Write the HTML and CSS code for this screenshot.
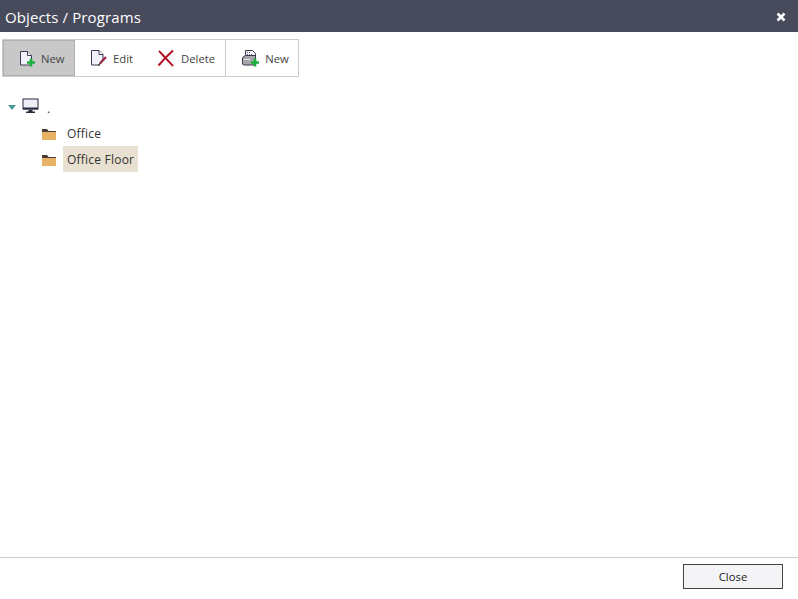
FILE: index.html
```html
<!DOCTYPE html>
<html lang="en">
<head>
<meta charset="utf-8">
<title>Objects / Programs</title>
<link rel="stylesheet" href="styles.css">
</head>
<body>
<div class="dialog">
  <header class="titlebar">
    <span class="title">Objects / Programs</span>
    <svg class="close-x" width="10" height="10" viewBox="0 0 10 10"><path d="M1.500 1.500l7 7M8.500 1.500l-7 7" stroke="#fff" stroke-width="2.600" fill="none"/></svg>
  </header>
  <div class="toolbar">
    <div class="group">
      <button class="tool active">
        <svg class="ico" width="18" height="18" viewBox="0 0 18 18"><path d="M3.500 2.500h7l4 4v9.500h-11z" fill="#f1f1fb" stroke="#3a3a55"/><path d="M10.500 2.500v4h4" fill="#fff" stroke="#3a3a55"/><path d="M12.700 9.500h2.600v2.700H18v2.600h-2.700v2.700h-2.600v-2.700H10v-2.600h2.700z" fill="#1aae3e"/></svg>
        <span>New</span>
      </button>
      <button class="tool edit">
        <svg class="ico" width="18" height="18" viewBox="0 0 18 18"><path d="M2.500 1.500h7.500l4 4v4.500l-4 6H2.500z" fill="#f1f1fb" stroke="#3a3a55"/><path d="M10 1.500v4h4" fill="#fff" stroke="#3a3a55"/><path d="M11 14.500l6-6.500" stroke="#a02845" stroke-width="2.200"/><path d="M9.500 16.800l1.500-2.300" stroke="#333" stroke-width="1.200"/></svg>
        <span>Edit</span>
      </button>
      <button class="tool del">
        <svg class="ico" width="18" height="18" viewBox="0 0 18 18"><path d="M2 2c4 4 9 10 14 15M16 1.500C11 6 6 11 1.500 16.500" stroke="#b01020" stroke-width="2" fill="none"/></svg>
        <span>Delete</span>
      </button>
    </div>
    <div class="group last">
      <button class="tool print">
        <svg class="ico" width="18" height="18" viewBox="0 0 18 18"><path d="M4.500 8V1.500h7l3 3V10" fill="#f6f6fb" stroke="#3a3a4a"/><path d="M6 3.500h4M6 5.500h6M6 7.500h6" stroke="#6a5a90" stroke-dasharray="1 1"/><path d="M1.500 8.500l3-2h10v9.500H2.500l-1-1z" fill="#a6a7ad" stroke="#3a3a4a"/><path d="M3 10.500h6" stroke="#e6e6ea"/><path d="M12.700 9.500h2.600v2.700H18v2.600h-2.700v2.700h-2.600v-2.700H10v-2.600h2.700z" fill="#1aae3e"/></svg>
        <span>New</span>
      </button>
    </div>
  </div>
  <main class="tree">
    <div class="node root">
      <span class="caret"></span>
      <svg class="pc" width="17" height="16" viewBox="0 0 17 16"><rect x="1" y="1" width="15" height="10" fill="#eeeef8" stroke="#2b2b40"/><rect x="1" y="9.500" width="15" height="2" fill="#2b2b40"/><path d="M6.500 12h4v1.500h2.500V15H4v-1.500h2.500z" fill="#2b2b40"/></svg>
      <span class="root-label">.</span>
    </div>
    <div class="node child">
      <svg class="folder" width="14" height="11" viewBox="0 0 14 11"><path d="M0 0h5l1.500 2H14v9H0z" fill="#e8b266"/><path d="M0 0h5l1.500 2H14v1H0z" fill="#4a3f35"/></svg>
      <span class="label">Office</span>
    </div>
    <div class="node child">
      <svg class="folder" width="14" height="11" viewBox="0 0 14 11"><path d="M0 0h5l1.500 2H14v9H0z" fill="#e8b266"/><path d="M0 0h5l1.500 2H14v1H0z" fill="#4a3f35"/></svg>
      <span class="label selected">Office Floor</span>
    </div>
  </main>
  <footer class="footer">
    <button class="close-btn">Close</button>
  </footer>
</div>
</body>
</html>
```
FILE: styles.css
```css
* { box-sizing: border-box; }
html, body { margin: 0; height: 100%; background: #fff; overflow: hidden; }
body { font-family: "Open Sans", "Noto Sans", sans-serif; font-size: 12px; color: #333; }
.dialog { display: flex; flex-direction: column; height: 599px; width: 798px; }
.titlebar { flex: none; height: 32px; background: #474a5a; color: #fff; display: flex; align-items: center; justify-content: space-between; padding: 1px 12px 0 5px; }
.title { font-size: 15px; letter-spacing: 0.12px; }
.toolbar { flex: none; display: flex; align-self: flex-start; margin: 7px 0 0 2px; height: 38px; border: 1px solid #ccc; }
.group { display: flex; }
.group.last { border-left: 1px solid #ccc; }
.tool { display: flex; align-items: center; gap: 6px; height: 36px; padding: 0 12px 0 14px; border: 0; background: none; font: inherit; font-size: 11.3px; color: #444; }
.tool.active { background: #c8c8c8; width: 72px; border: 1px solid #b0b0b0; padding-left: 13px; }
.tool.del { padding: 0 10px 0 12px; }
.tool.print { padding: 0 9px 0 15px; }
.ico { flex: none; }
.tree { flex: 1; padding: 17px 0 0 8px; }
.node { display: flex; align-items: center; }
.root { height: 24px; margin-bottom: 2px; }
.caret { width: 0; height: 0; border-left: 4px solid transparent; border-right: 4px solid transparent; border-top: 5px solid #4a9a9c; margin-right: 6px; margin-top: 3px; }
.root-label { margin-left: 8px; margin-top: 4px; }
.child { height: 26px; padding-left: 34px; }
.folder { flex: none; margin-top: 3px; }
.label { margin-left: 7px; padding: 0 4px; height: 26px; line-height: 27px; color: #333; letter-spacing: 0.22px; }
.selected { background: #e8e0d0; }
.footer { flex: none; height: 42px; border-top: 1px solid #ccc; display: flex; justify-content: flex-end; padding: 6px 15px 0 0; }
.close-btn { width: 100px; height: 25px; background: #f4f4f6; border: 1px solid #444; font: inherit; font-size: 11.3px; color: #222; }
```
